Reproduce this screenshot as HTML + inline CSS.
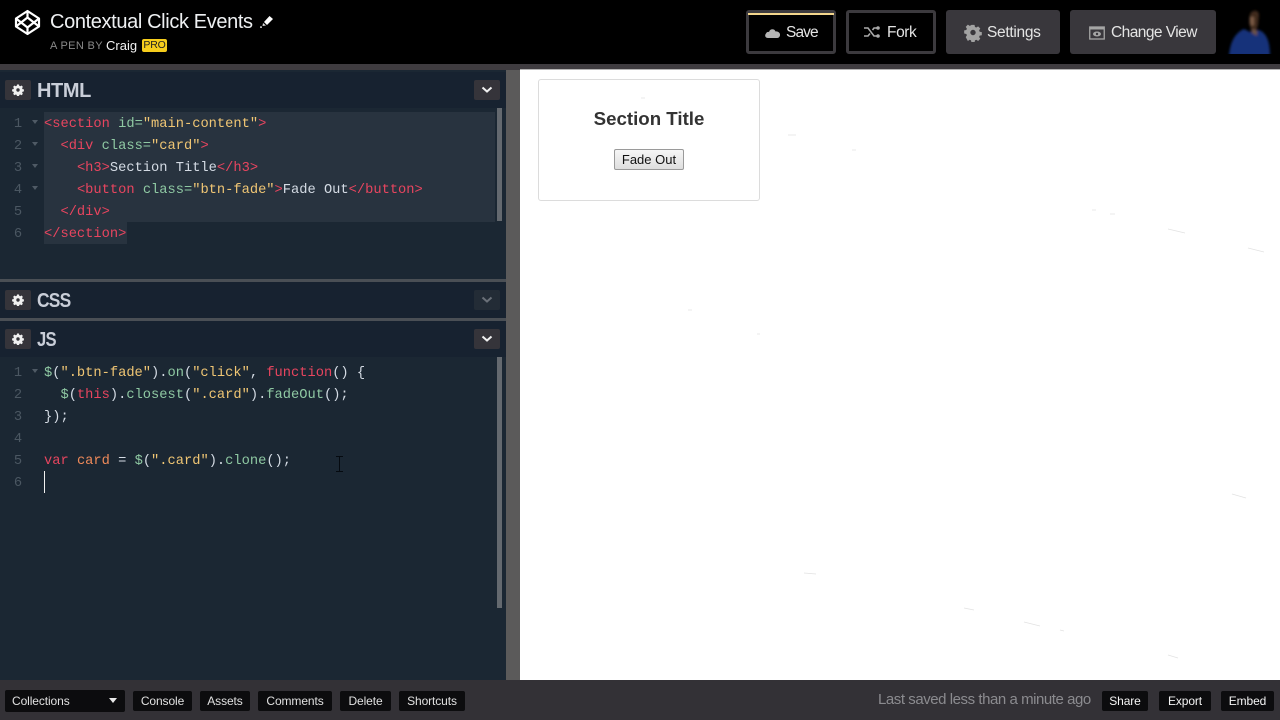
<!DOCTYPE html>
<html>
<head>
<meta charset="utf-8">
<style>
html,body{margin:0;padding:0;width:1280px;height:720px;overflow:hidden;background:#fff}
body{position:relative;font-family:"Liberation Sans",sans-serif}
.a{position:absolute}
.t{position:absolute;white-space:nowrap}
.btn{position:absolute;box-sizing:border-box;border-radius:3px}
.dark{background:#000;border:3px solid #3c3a3e;height:44px;top:10px}
.grey{background:#39373c;height:44px;top:10px}
.bl{position:absolute;color:#e4e4e4;font-size:15.5px;line-height:20px;top:23px;white-space:nowrap;letter-spacing:-.4px}
.gear{position:absolute;width:26px;height:20px;left:5px;background:#35343a;border-radius:2px}
.gear svg{position:absolute;left:7px;top:4px}
.h{position:absolute;left:37px;font-size:20px;font-weight:bold;color:#c9ced8;line-height:24px;letter-spacing:-.4px;transform-origin:left center}
.chev{position:absolute;left:474px;width:26px;height:20px;background:#35343a;border-radius:2px}
.chev svg{position:absolute;left:7px;top:6px}
.code{position:absolute;left:44px;font-family:"Liberation Mono",monospace;font-size:13.73px;line-height:22px;white-space:pre;color:#d4dbe4}
.n{position:absolute;left:10px;width:16px;text-align:center;font-family:"Liberation Mono",monospace;font-size:13.73px;line-height:22px;color:#4b5762}
.f{position:absolute;left:32px;width:0;height:0;border-left:3px solid transparent;border-right:3px solid transparent;border-top:4px solid #4f5a65}
.r{color:#e8455f}.y{color:#f0c674}.g{color:#8fc9a3}.w{color:#d4dbe4}.p{color:#e8455f}
.fb{position:absolute;top:691px;height:20px;background:#0c0c0e;border-radius:2px;color:#e0e0e0;font-size:12px;line-height:20px;text-align:center;letter-spacing:-.1px}
</style>
</head>
<body>

<!-- Top bar -->
<div class="a" style="left:0;top:0;width:1280px;height:64px;background:#000"></div>
<div class="a" style="left:0;top:64px;width:1280px;height:6px;background:#3f3c40"></div>
<div class="a" style="left:520px;top:69px;width:760px;height:1px;background:#b5b5b5"></div>

<svg class="a" style="left:14px;top:9px" width="27" height="27" viewBox="0 0 27 27" fill="none" stroke="#fff" stroke-width="2.2" stroke-linejoin="round">
<path d="M13.5 2 L25 9.5 V17.5 L13.5 25 L2 17.5 V9.5 Z"/>
<path d="M13.5 2 V8.5 M13.5 18.5 V25 M2 9.5 L13.5 18.5 L25 9.5 M2 17.5 L13.5 8.5 L25 17.5"/>
</svg>
<div class="t" style="left:50px;top:10px;font-size:20px;line-height:24px;color:#eef0f2;letter-spacing:-.37px">Contextual Click Events</div>
<svg class="a" style="left:259px;top:14px" width="15" height="14" viewBox="0 0 15 14"><path d="M5 8 L10.5 2 L14 5 L8 11 Z" fill="#fff"/><path d="M1 12.5 h2 v1.2 h-2z" fill="#fff"/><path d="M4 9 L7 11.5 L3.5 12 Z" fill="#ddd"/></svg>
<div class="t" style="left:50px;top:39px;font-size:11px;line-height:15px;color:#8a8a8a;letter-spacing:.35px">A PEN BY</div>
<div class="t" style="left:106px;top:38px;font-size:13px;line-height:16px;color:#f2f2f2;letter-spacing:0">Craig</div>
<div class="a" style="left:142px;top:39px;width:25px;height:13px;background:#f6cd1c;border-radius:2px;color:#222;font-size:10.5px;line-height:13px;text-align:center;letter-spacing:-.2px">PRO</div>

<!-- Top buttons -->
<div class="btn dark" style="left:746px;width:90px"></div>
<div class="a" style="left:748px;top:13px;width:86px;height:2px;background:#f2d58c"></div>
<svg class="a" style="left:764px;top:26px" width="17" height="13" viewBox="0 0 17 13"><path d="M4 12 C1 12 .5 9 2 7.5 C2.500 6 4 5.500 5 6 C6 2.500 10.500 2.500 11.500 5.500 C14 5 16.500 7 16 9.500 C15.700 11 14.500 12 13 12 Z" fill="#b5b5b5"/></svg>
<div class="bl" style="left:786px;letter-spacing:-.9px">Save</div>

<div class="btn dark" style="left:846px;width:90px"></div>
<svg class="a" style="left:864px;top:25px" width="17" height="15" viewBox="0 0 17 15" fill="none" stroke="#aaa" stroke-width="1.6"><path d="M0 3 H4 L10 11 H14 M0 11 H4 L6 8.500 M8.500 5 L10 3 H14"/><circle cx="14" cy="3" r="1.800" fill="#aaa" stroke="none"/><circle cx="14" cy="11" r="1.800" fill="#aaa" stroke="none"/></svg>
<div class="bl" style="left:887px">Fork</div>

<div class="btn grey" style="left:946px;width:114px"></div>
<svg class="a" style="left:964px;top:24px" width="18" height="18" viewBox="0 0 18 18"><path fill="#a2a2a2" fill-rule="evenodd" d="M7.300 .5h3.400l.5 2.400 1.500.6 2-1.300 2.400 2.400-1.300 2 .6 1.500 2.400.5v3.400l-2.400.5-.6 1.500 1.300 2-2.400 2.400-2-1.300-1.500.6-.5 2.400H7.300l-.5-2.400-1.500-.6-2 1.300L.9 14.100l1.300-2-.6-1.500L-.8 10.100V6.700l2.400-.5.6-1.500-1.300-2L3.300.3l2 1.300 1.500-.6zM9 6a3 3 0 1 0 0 6 3 3 0 0 0 0-6z" transform="translate(.9 .4) scale(.9)"/></svg>
<div class="bl" style="left:987px;letter-spacing:-.3px">Settings</div>

<div class="btn grey" style="left:1070px;width:146px"></div>
<svg class="a" style="left:1089px;top:26px" width="16" height="14" viewBox="0 0 16 14" fill="none"><rect x=".75" y="1" width="14.500" height="12" stroke="#a5a5a5" stroke-width="1.300"/><rect x="1" y="1" width="14" height="2.500" fill="#a5a5a5"/><ellipse cx="8" cy="8" rx="4" ry="2.500" fill="#a5a5a5"/><circle cx="8" cy="8" r="1.200" fill="#39373c"/></svg>
<div class="bl" style="left:1111px;letter-spacing:-.55px">Change View</div>

<!-- Avatar -->
<svg class="a" style="left:1226px;top:8px" width="48" height="46" viewBox="0 0 48 46">
<defs><filter id="bl"><feGaussianBlur stdDeviation="1.300"/></filter></defs>
<g filter="url(#bl)">
<path d="M3 48 C4 34 9 25 18 21 L24 24 L33 22 C40 25 44 32 44 48 Z" fill="#14337a"/>
<path d="M24 6 C27 1 33 2 33 7 L32 17 L30 23 L25 21 L23 15 Z" fill="#3f2a1d"/>
<path d="M23.500 9 L28 9 L28 17 L25 18 Z" fill="#7a5a44"/>
<path d="M25 21 L31 22 L31 28 L26 25 Z" fill="#6b5145"/>
</g>
</svg>

<!-- Left column background -->
<div class="a" style="left:0;top:70px;width:506px;height:610px;background:#1b2733"></div>
<div class="a" style="left:506px;top:70px;width:14px;height:610px;background:#5b5a5a"></div>

<!-- HTML panel -->
<div class="a" style="left:0;top:72px;width:506px;height:36px;background:#172230"></div>
<div class="gear" style="top:80px"><svg width="12" height="12" viewBox="0 0 12 12"><path fill="#f0f0f0" fill-rule="evenodd" d="M5 .5h2l.3 1.400 1 .4 1.200-.8 1.400 1.400-.8 1.200.4 1 1.400.3v2l-1.400.3-.4 1 .8 1.200-1.400 1.400-1.200-.8-1 .4-.3 1.400H5l-.3-1.400-1-.4-1.200.8L1.100 9.900l.8-1.200-.4-1L.1 7.400v-2l1.400-.3.4-1-.8-1.200L2.500 1.500l1.200.8 1-.4zM6 4.300a1.700 1.700 0 1 0 0 3.400 1.700 1.700 0 0 0 0-3.400z"/></svg></div>
<div class="h" style="top:79px">HTML</div>
<div class="chev" style="top:80px"><svg width="12" height="8" viewBox="0 0 12 8" fill="none"><path d="M1.500 1.500 L6 5.500 L10.500 1.500" stroke="#f0f0f0" stroke-width="2"/></svg></div>

<div class="a" style="left:44px;top:112px;width:451px;height:110px;background:#28333f"></div>
<div class="a" style="left:44px;top:222px;width:83px;height:22px;background:#28333f"></div>
<div class="a" style="left:497px;top:108px;width:5px;height:113px;background:#64696f"></div>

<div class="n" style="top:114px">1</div><div class="f" style="top:120px"></div>
<div class="n" style="top:136px">2</div><div class="f" style="top:142px"></div>
<div class="n" style="top:158px">3</div><div class="f" style="top:164px"></div>
<div class="n" style="top:180px">4</div><div class="f" style="top:186px"></div>
<div class="n" style="top:202px">5</div>
<div class="n" style="top:224px">6</div>

<div class="code" style="top:114px"><span class="r">&lt;section</span> <span class="g">id=</span><span class="y">"main-content"</span><span class="r">&gt;</span>
  <span class="r">&lt;div</span> <span class="g">class=</span><span class="y">"card"</span><span class="r">&gt;</span>
    <span class="r">&lt;h3&gt;</span>Section Title<span class="r">&lt;/h3&gt;</span>
    <span class="r">&lt;button</span> <span class="g">class=</span><span class="y">"btn-fade"</span><span class="r">&gt;</span>Fade Out<span class="r">&lt;/button&gt;</span>
  <span class="r">&lt;/div&gt;</span>
<span class="r">&lt;/section&gt;</span></div>

<!-- CSS panel -->
<div class="a" style="left:0;top:279px;width:506px;height:3px;background:#4a4f55"></div>
<div class="a" style="left:0;top:282px;width:506px;height:36px;background:#172230"></div>
<div class="gear" style="top:290px"><svg width="12" height="12" viewBox="0 0 12 12"><path fill="#f0f0f0" fill-rule="evenodd" d="M5 .5h2l.3 1.400 1 .4 1.200-.8 1.400 1.400-.8 1.200.4 1 1.400.3v2l-1.400.3-.4 1 .8 1.200-1.400 1.400-1.200-.8-1 .4-.3 1.400H5l-.3-1.400-1-.4-1.200.8L1.100 9.900l.8-1.200-.4-1L.1 7.400v-2l1.400-.3.4-1-.8-1.200L2.500 1.500l1.200.8 1-.4zM6 4.300a1.700 1.700 0 1 0 0 3.400 1.700 1.700 0 0 0 0-3.400z"/></svg></div>
<div class="h" style="top:289px;letter-spacing:-.9px;transform:scaleX(.87)">CSS</div>
<div class="chev" style="top:290px;background:#232c36"><svg width="12" height="8" viewBox="0 0 12 8" fill="none"><path d="M1.500 1.500 L6 5.500 L10.500 1.500" stroke="#6a7078" stroke-width="2"/></svg></div>

<!-- JS panel -->
<div class="a" style="left:0;top:318px;width:506px;height:3px;background:#4a4f55"></div>
<div class="a" style="left:0;top:321px;width:506px;height:36px;background:#172230"></div>
<div class="gear" style="top:329px"><svg width="12" height="12" viewBox="0 0 12 12"><path fill="#f0f0f0" fill-rule="evenodd" d="M5 .5h2l.3 1.400 1 .4 1.200-.8 1.400 1.400-.8 1.200.4 1 1.400.3v2l-1.400.3-.4 1 .8 1.200-1.400 1.400-1.200-.8-1 .4-.3 1.400H5l-.3-1.400-1-.4-1.200.8L1.100 9.900l.8-1.200-.4-1L.1 7.400v-2l1.400-.3.4-1-.8-1.200L2.500 1.500l1.200.8 1-.4zM6 4.300a1.700 1.700 0 1 0 0 3.400 1.700 1.700 0 0 0 0-3.400z"/></svg></div>
<div class="h" style="top:328px;letter-spacing:-.9px;transform:scaleX(.83)">JS</div>
<div class="chev" style="top:329px"><svg width="12" height="8" viewBox="0 0 12 8" fill="none"><path d="M1.500 1.500 L6 5.500 L10.500 1.500" stroke="#f0f0f0" stroke-width="2"/></svg></div>

<div class="a" style="left:497px;top:357px;width:5px;height:251px;background:#64696f"></div>

<div class="n" style="top:363px">1</div><div class="f" style="top:369px"></div>
<div class="n" style="top:385px">2</div>
<div class="n" style="top:407px">3</div>
<div class="n" style="top:429px">4</div>
<div class="n" style="top:451px">5</div>
<div class="n" style="top:473px">6</div>

<div class="code" style="top:363px"><span class="g">$</span>(<span class="y">".btn-fade"</span>).<span class="g">on</span>(<span class="y">"click"</span>, <span class="r">function</span>() {
  <span class="g">$</span>(<span class="r">this</span>).<span class="g">closest</span>(<span class="y">".card"</span>).<span class="g">fadeOut</span>();
});

<span class="r">var</span> <span style="color:#ef8a5a">card</span> = <span class="g">$</span>(<span class="y">".card"</span>).<span class="g">clone</span>();</div>
<div class="a" style="left:44px;top:471px;width:1px;height:22px;background:#f0f0f0"></div>

<!-- I-beam cursor -->
<svg class="a" style="left:335px;top:456px" width="9" height="16" viewBox="0 0 9 16" fill="none" stroke="#050a10" stroke-width="1"><path d="M1 .5 H8 M4.500 .5 V15.500 M1 15.500 H8"/></svg>

<!-- Preview -->
<div class="a" style="left:538px;top:79px;width:222px;height:122px;box-sizing:border-box;background:#fff;border:1px solid #dcdcdc;border-radius:3px"></div>
<div class="t" style="left:538px;width:222px;top:108px;text-align:center;font-size:18.7px;line-height:22px;font-weight:bold;color:#333">Section Title</div>
<div class="a" style="left:614px;top:149px;width:70px;height:21px;box-sizing:border-box;border:1px solid #9a9a9a;border-radius:2px;background:linear-gradient(#f6f6f6,#dedede);color:#111;font-size:13px;line-height:19px;text-align:center">Fade Out</div>

<!-- Preview artifacts -->
<svg class="a" style="left:520px;top:70px" width="760" height="610" fill="none" stroke="#e2e2e2" stroke-width=".7">
<path d="M121 28h4M268 65h8M332 80h4M572 140h4M590 144h5M648 159l17 4M728 178l16 4M168 240h4M237 264h3M712 424l14 4M284 503l12 1M444 538l10 2M504 552l16 4M540 560l4 1M648 585l10 3"/>
</svg>

<!-- Footer -->
<div class="a" style="left:0;top:680px;width:1280px;height:40px;background:#333136"></div>
<div class="fb" style="left:5px;top:690px;width:120px;height:22px;line-height:22px;text-align:left;text-indent:7px">Collections</div>
<div class="a" style="left:109px;top:698px;width:0;height:0;border-left:4px solid transparent;border-right:4px solid transparent;border-top:5px solid #e8e8e8"></div>
<div class="fb" style="left:133px;width:59px">Console</div>
<div class="fb" style="left:200px;width:50px">Assets</div>
<div class="fb" style="left:258px;width:74px">Comments</div>
<div class="fb" style="left:340px;width:51px">Delete</div>
<div class="fb" style="left:399px;width:66px">Shortcuts</div>
<div class="t" style="left:878px;top:690px;font-size:15px;line-height:20px;color:#8b8b8f;letter-spacing:-.45px">Last saved less than a minute ago</div>
<div class="fb" style="left:1102px;width:46px;color:#f4f4f4">Share</div>
<div class="fb" style="left:1159px;width:52px;color:#f4f4f4">Export</div>
<div class="fb" style="left:1221px;width:53px;color:#f4f4f4">Embed</div>

</body>
</html>
